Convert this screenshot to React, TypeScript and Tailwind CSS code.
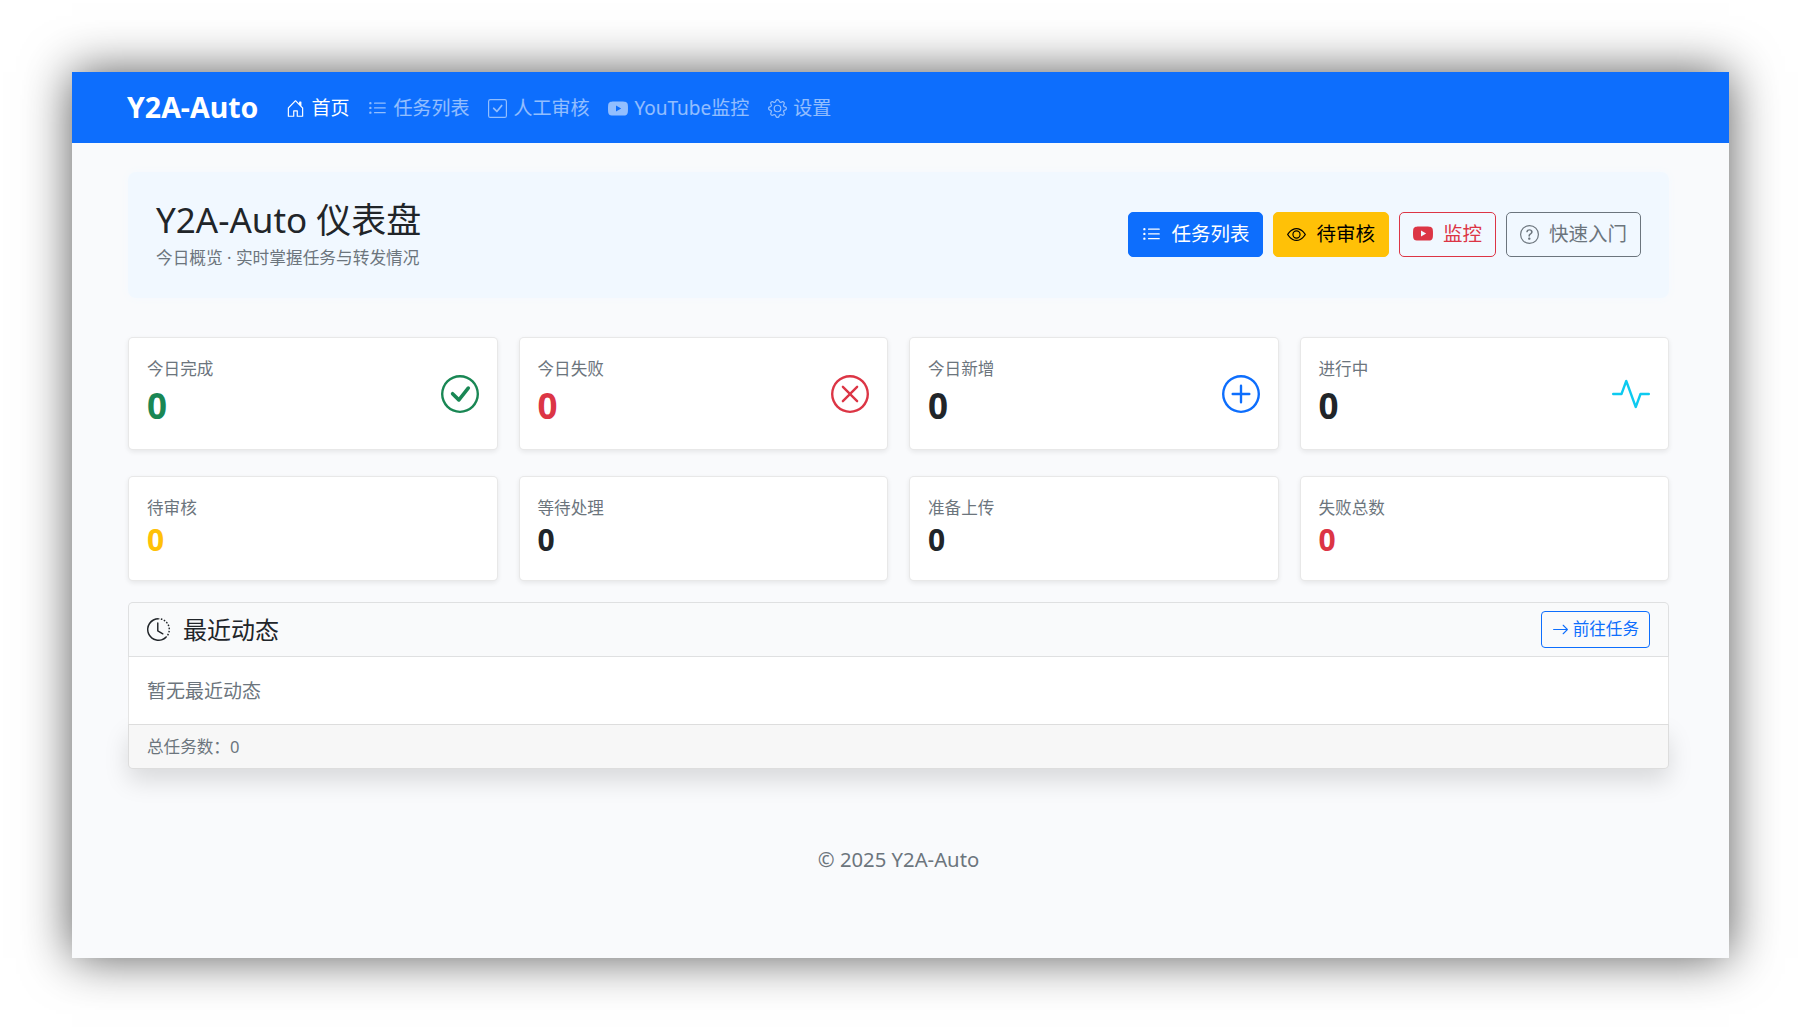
import { ReactNode } from "react";
import {
  BsActivity,
  BsArrowRight,
  BsCheckCircle,
  BsCheckSquare,
  BsClockHistory,
  BsEye,
  BsGear,
  BsHouseDoor,
  BsListUl,
  BsPlusCircle,
  BsQuestionCircle,
  BsXCircle,
  BsYoutube,
} from "react-icons/bs";

const NavItem = ({ icon, label, active }: { icon: ReactNode; label: string; active?: boolean }) => (
  <a className={`flex items-center gap-[6px] pt-[2px] text-[19px] ${active ? "text-white" : "text-white/55"}`}>
    {icon}
    <span>{label}</span>
  </a>
);

const HeroButton = ({ icon, label, className }: { icon: ReactNode; label: string; className: string }) => (
  <a className={`flex h-[45px] items-center gap-[10px] rounded-[5px] border px-[13px] text-[19.5px] ${className}`}>
    {icon}
    <span>{label}</span>
  </a>
);

const BigStat = ({ label, valueColor, icon }: { label: string; valueColor: string; icon: ReactNode }) => (
  <div className="flex h-[113px] items-center justify-between rounded-[5px] border border-black/[0.09] bg-white px-[18px] shadow-[0_2px_5px_rgba(0,0,0,0.08)]">
    <div className="-mt-[4px]">
      <div className="text-[16.6px] leading-[26px] text-[#6c757d]">{label}</div>
      <div className={`mt-[3px] text-[35px] font-bold leading-[42px] ${valueColor}`}>0</div>
    </div>
    {icon}
  </div>
);

const SmallStat = ({ label, valueColor }: { label: string; valueColor: string }) => (
  <div className="h-[105px] rounded-[5px] border border-black/[0.09] bg-white px-[18px] pt-[18px] shadow-[0_2px_5px_rgba(0,0,0,0.08)]">
    <div className="text-[16.6px] leading-[26px] text-[#6c757d]">{label}</div>
    <div className={`mt-[1px] text-[30px] font-bold leading-[36px] ${valueColor}`}>0</div>
  </div>
);

const App = () => {
  return (
    <div className="h-[1030px] w-[1800px] overflow-hidden bg-white pl-[72px] pt-[72px] font-['Noto_Sans','Noto_Sans_CJK_SC',sans-serif] text-[#212529]">
      <div className="flex h-[886px] w-[1657px] flex-col bg-[#f9fafc] shadow-[0_0_46px_rgba(0,0,0,0.65)]">
        <nav className="flex h-[71px] shrink-0 items-center gap-[19px] bg-[#0d6efd] pl-[55px]">
          <a className="mr-[9px] text-[28.5px] font-bold text-white">Y2A-Auto</a>
          <NavItem active icon={<BsHouseDoor size={19} />} label="首页" />
          <NavItem icon={<BsListUl size={19} />} label="任务列表" />
          <NavItem icon={<BsCheckSquare size={19} />} label="人工审核" />
          <NavItem icon={<BsYoutube size={20} />} label="YouTube监控" />
          <NavItem icon={<BsGear size={19} />} label="设置" />
        </nav>

        <main className="flex flex-col pl-[56px] pr-[60px] pt-[29px]">
          <section className="flex h-[126px] items-center justify-between rounded-lg bg-[#f1f8ff] pl-[28px] pr-[28px] shadow-[0_0_10px_#f4f9ff]">
            <div>
              <h1 className="mb-[6px] text-[35px] leading-[40px]">Y2A-Auto 仪表盘</h1>
              <p className="text-[16.7px] leading-[24px] text-[#6c757d]">今日概览 · 实时掌握任务与转发情况</p>
            </div>
            <div className="-mt-[2px] flex gap-[10px]">
              <HeroButton className="border-[#0d6efd] bg-[#0d6efd] text-white" icon={<BsListUl size={19} />} label="任务列表" />
              <HeroButton className="border-[#ffc107] bg-[#ffc107] text-black" icon={<BsEye size={19} />} label="待审核" />
              <HeroButton className="border-[#dc3545] text-[#dc3545]" icon={<BsYoutube size={20} />} label="监控" />
              <HeroButton className="border-[#6c757d] text-[#6c757d]" icon={<BsQuestionCircle size={19} />} label="快速入门" />
            </div>
          </section>

          <div className="mt-[39px] grid grid-cols-4 gap-x-[21px]">
            <BigStat label="今日完成" valueColor="text-[#198754]" icon={<BsCheckCircle size={38} className="text-[#198754]" />} />
            <BigStat label="今日失败" valueColor="text-[#dc3545]" icon={<BsXCircle size={38} className="text-[#dc3545]" />} />
            <BigStat label="今日新增" valueColor="text-[#212529]" icon={<BsPlusCircle size={38} className="text-[#0d6efd]" />} />
            <BigStat label="进行中" valueColor="text-[#212529]" icon={<BsActivity size={38} className="text-[#0dcaf0]" />} />
          </div>

          <div className="mt-[26px] grid grid-cols-4 gap-x-[21px]">
            <SmallStat label="待审核" valueColor="text-[#ffc107]" />
            <SmallStat label="等待处理" valueColor="text-[#212529]" />
            <SmallStat label="准备上传" valueColor="text-[#212529]" />
            <SmallStat label="失败总数" valueColor="text-[#dc3545]" />
          </div>

          <section className="mt-[21px] rounded-[5px]">
            <div className="relative z-10 flex h-[55px] items-center justify-between rounded-t-[5px] border border-black/10 bg-[#f9fafb] px-[18px]">
              <div className="flex items-center gap-[13px] text-[24px]">
                <BsClockHistory size={23} />
                <span>最近动态</span>
              </div>
              <a className="flex h-[37px] items-center gap-[4px] rounded-[4px] border border-[#0d6efd] px-[10px] text-[16.6px] text-[#0d6efd]">
                <BsArrowRight size={17} />
                <span>前往任务</span>
              </a>
            </div>
            <div className="relative z-10 flex h-[67px] items-center border-x border-black/10 bg-white pl-[18px] pt-[2px] text-[19px] text-[#6c757d]">暂无最近动态</div>
            <div className="flex h-[45px] items-center rounded-b-[5px] border border-black/10 bg-[#f7f7f7] pl-[18px] pt-[2px] text-[16.6px] text-[#6c757d] shadow-[0_12px_24px_rgba(0,0,0,0.13)]">总任务数：0</div>
          </section>

          <footer className="mt-[76px] text-center text-[20.3px] leading-[28px] text-[#6c757d]">© 2025 Y2A-Auto</footer>
        </main>
      </div>
    </div>
  );
};

export default App;
